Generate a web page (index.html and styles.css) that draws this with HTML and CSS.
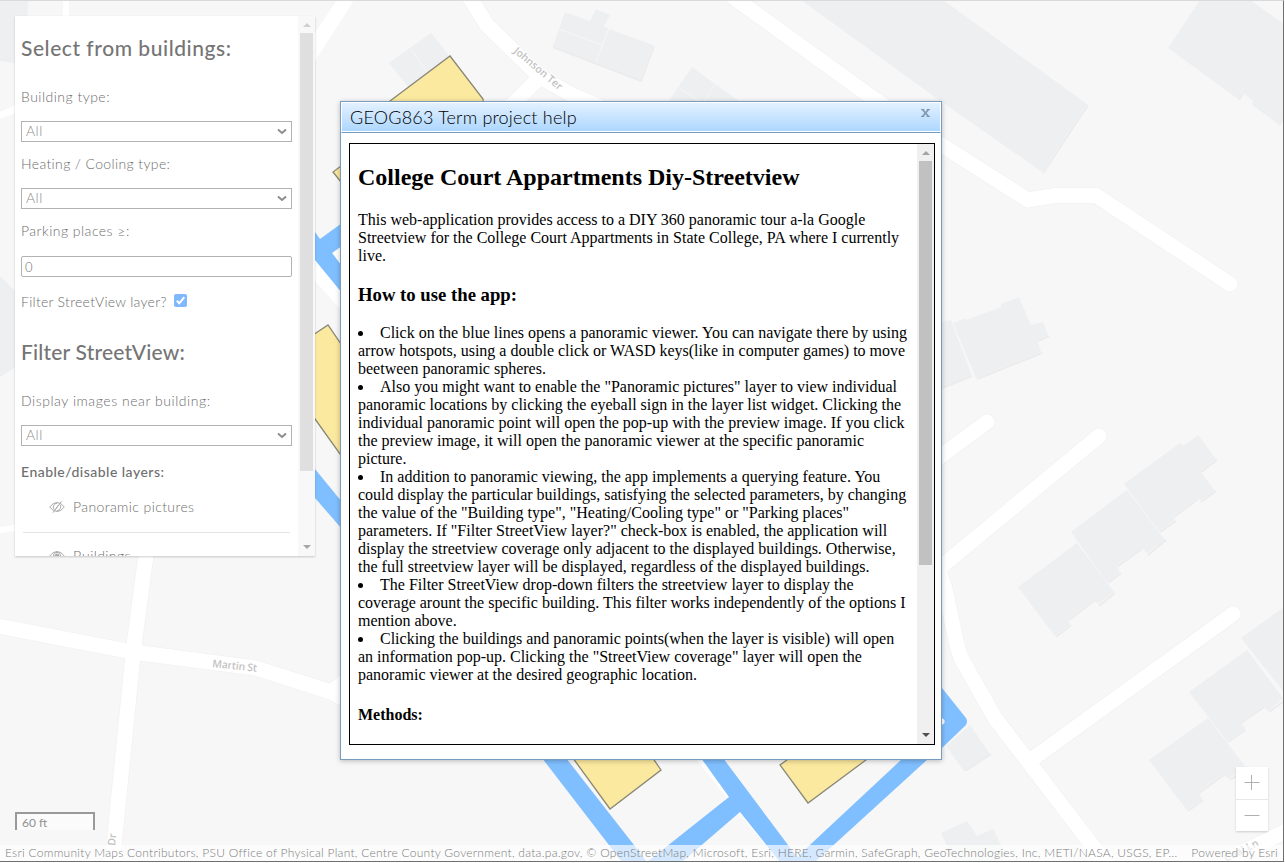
FILE: index.html
```html
<!DOCTYPE html>
<html lang="en">
<head>
<meta charset="utf-8">
<title>GEOG863 Term project</title>
<link rel="stylesheet" href="styles.css">
</head>
<body>
<div class="app">
  <svg class="map" viewBox="0 0 1285 863" width="1285" height="863">
    <rect class="ground" width="1285" height="863"/>
    <g class="buildings">
      <path d="M0 0H28L27 62L15 63L0 61Z"/>
      <path d="M0 276L16 292V367L0 377Z"/>
      <path d="M801 0H943L1087 104L1042 172L939 100Z"/>
      <path d="M565 12L590 21L596 9L610 15L604 26L609 29L653 45L640 80L553 46Z"/>
      <path d="M692 67L715 84L739 101H669Z"/>
      <path d="M431 33L450 57L409 88L389 63Z"/>
      <path d="M1200 0L1168 48L1238 99L1243 93L1253 101L1252 105L1278 124L1284 117V24L1250 0Z"/>
      <path d="M930 324L951 320L972 375L930 392Z"/>
      <path d="M953 323L966 318V320L1001 307V304L1019 297L1031 325L1043 322L1048 335L1037 340L1041 352L976 378Z"/>
      <path d="M1124 484L1180 443L1183 446L1198 435L1216 459L1200 471L1215 491L1201 500L1197 498L1173 516L1175 520L1159 531Z"/>
      <path d="M1071 532L1127 490L1165 540L1147 553L1142 548L1116 566L1120 572L1107 582Z"/>
      <path d="M1018 587L1077 543L1114 592L1098 604L1093 600L1068 619L1070 624L1055 636Z"/>
      <path d="M1241 638L1284 607V692Z"/>
      <path d="M1189 692L1247 650L1283 698L1268 711L1263 706L1241 722L1245 729L1227 741Z"/>
      <path d="M1149 760L1208 718L1245 766L1229 779L1223 774L1198 792L1202 799L1187 810Z"/>
      <path d="M946 746L970 725L990 754L964 771Z"/>
      <path d="M941 833L967 821L977 836L993 829L1001 845L1005 863H955Z"/>
    </g>
    <g class="shades">
      <path d="M1088 105L1043 173"/>
      <path d="M654 46L641 81L553 47"/>
      <path d="M1239 100L1243 94M1279 125L1284 118"/>
      <path d="M942 388L972 376M977 379L1042 353M1038 341L1049 336"/>
      <path d="M1160 532L1176 521M1174 517L1198 499M1201 502L1216 491M1201 472L1217 460"/>
      <path d="M1108 583L1121 573M1117 567L1142 549M1148 555L1166 540"/>
      <path d="M1056 637L1071 625M1069 620L1094 601M1099 606L1115 593"/>
      <path d="M1228 742L1245 730M1241 723L1264 707M1269 712L1284 701"/>
      <path d="M1188 811L1203 800M1199 793L1224 775M1230 780L1243 771"/>
      <path d="M965 771L991 754"/>
    </g>
    <path class="walls" d="M559 29L602 45M609 28L596 62M679 88L700 102M715 84L704 102M411 49L428 74M972 375L952 321"/>
    <g class="road-casing">
      <path d="M-5 625.5L133 652L256 668L331 692L352 703M331 692L352 676"/>
      <path d="M148 540L134 645L112 865"/>
      <path d="M468 -5L487 25L540 77L574 96L600 107M537 80L512 105"/>
      <path d="M730 -5L877 101L940 144L1028 200L1055 195.500H1096L1230 284"/>
      <path d="M930 464L987 422"/><path d="M930 576L1099 436"/>
      <path d="M935 560L945 589L957 645L961 658L995 718L1108 866M1035 757L1233 614"/>
      <path d="M1225 861L1290 829"/>
    </g>
    <g class="roads">
      <path d="M-5 625.5L133 652L256 668L331 692L352 703M331 692L352 676"/>
      <path d="M148 540L134 645L112 865"/>
      <path d="M468 -5L487 25L540 77L574 96L600 107M537 80L512 105"/>
      <path d="M730 -5L877 101L940 144L1028 200L1055 195.500H1096L1230 284"/>
      <path d="M930 464L987 422"/><path d="M930 576L1099 436"/>
      <path d="M935 560L945 589L957 645L961 658L995 718L1108 866M1035 757L1233 614"/>
      <path d="M1225 861L1290 829"/>
    </g>
    <path class="lane" d="M337 0H354L315 61V33Z M63 0H69V20H63Z M0 112L16 105V113L0 119Z M0 527L16 525V531L0 533Z M315 258L342 291V311L315 281Z M696 759H712L770 845H765Z"/>
    <g class="coverage">
      <path d="M315 232L320 239L342 223V246L332 253L342 266V293L315 260Z"/>
      <path d="M315 469L342 502V529L315 498Z"/>
      <path d="M542 758H566L634 845L647 862H622Z"/>
      <path d="M647 862L729 797L701 758H723L797 857L902 759L942 724V688L966 718Q968 721 966 725L942 748L928 759L815 862H780L740 812L682 862Z"/>
    </g>
    <path class="lane" d="M942 718L944.500 720V723L942 725Z M342 246L333 253L342 266Z"/>
    <g class="houses">
      <path d="M450 56L483 99L484 110H380L390 101Z"/>
      <path d="M345 163L333 172L345 187Z"/>
      <path d="M310 337L328 325L345 350V461L310 412Z"/>
      <path d="M570 754L610 809L661 770L650 754Z"/>
      <path d="M795 754L780 765L808 803L874 754Z"/>
    </g>
    <g class="street-names">
      <text transform="translate(513 52) rotate(40)" textLength="60">Johnson Ter</text>
      <text transform="translate(212 667) rotate(6)" textLength="45">Martin St</text>
      <text transform="translate(115 846) rotate(-84)">Dr</text>
      <text transform="translate(1226 862) rotate(-26)">Coal Ln</text>
    </g>
  </svg>

  <aside class="panel">
    <div class="form">
      <h2 class="heading">Select from buildings:</h2>
      <div class="label first">Building type:</div>
      <div class="select">All<svg class="caret" viewBox="0 0 10 7"><path d="M1 1.500L5 5L9 1.500"/></svg></div>
      <div class="label tight">Heating / Cooling type:</div>
      <div class="select">All<svg class="caret" viewBox="0 0 10 7"><path d="M1 1.500L5 5L9 1.500"/></svg></div>
      <div class="label">Parking places ≥:</div>
      <div class="select input">0</div>
      <div class="label check-row">Filter StreetView layer?<svg class="check" viewBox="0 0 13 13"><rect width="13" height="13" rx="2"/><path d="M2.800 6.800L5.300 9.300L10.300 3.200"/></svg></div>
      <h2 class="heading second">Filter StreetView:</h2>
      <div class="label first wide">Display images near building:</div>
      <div class="select">All<svg class="caret" viewBox="0 0 10 7"><path d="M1 1.500L5 5L9 1.500"/></svg></div>
      <div class="label strong">Enable/disable layers:</div>
      <div class="layer"><svg class="eye" viewBox="0 0 16 12"><path d="M.7 6Q4 1.500 8 1.500T15.300 6Q12 10.500 8 10.500T.7 6ZM10.500 3.200A3.700 3.700 0 0 1 8 9.700M8 2.300A3.700 3.700 0 0 0 5.400 8.700M12.500 .3L4 11.700M9.200 4.300L6.800 8"/></svg>Panoramic pictures</div>
      <div class="layer next"><svg class="eye" viewBox="0 0 16 12"><path d="M.7 6Q4 1.500 8 1.500T15.300 6Q12 10.500 8 10.500T.7 6Z"/><circle cx="8" cy="6" r="3.700"/><circle class="pupil" cx="8" cy="6" r="2"/></svg>Buildings</div>
    </div>
    <div class="scroll faded"><i class="up"></i><i class="thumb"></i><i class="down"></i></div>
  </aside>

  <div class="scalebar">60 ft</div>
  <div class="zoom"><div class="zoom-btn"><svg viewBox="0 0 16 16"><path d="M.5 7.500H15.500M7.500 0V15"/></svg></div><div class="zoom-btn"><svg viewBox="0 0 16 16"><path d="M.5 7.500H15.500"/></svg></div></div>
  <footer class="attribution"><span class="sources">Esri Community Maps Contributors, PSU Office of Physical Plant, Centre County Government, data.pa.gov, © OpenStreetMap, Microsoft, Esri, HERE, Garmin, SafeGraph, GeoTechnologies, Inc, METI/NASA, USGS, EP…</span><span class="powered">Powered by Esri</span></footer>

  <section class="dialog">
    <header class="titlebar"><span class="title">GEOG863 Term project help</span><svg class="close" viewBox="0 0 9 8"><path d="M0 .5H3.300M5.700 .5H9M0 7.500H3.300M5.700 7.500H9"/><path class="cross" d="M1.500 .5L7.500 7.500M7.500 .5L1.500 7.500"/></svg></header>
    <div class="frame">
      <article class="help">
        <h2>College Court Appartments Diy-Streetview</h2>
        <p>This web-application provides access to a DIY 360 panoramic tour a-la Google Streetview for the College Court Appartments in State College, PA where I currently live.</p>
        <h3>How to use the app:</h3>
        <ul class="steps">
          <li>Click on the blue lines opens a panoramic viewer. You can navigate there by using arrow hotspots, using a double click or WASD keys(like in computer games) to move beetween panoramic spheres.</li>
          <li>Also you might want to enable the "Panoramic pictures" layer to view individual panoramic locations by clicking the eyeball sign in the layer list widget. Clicking the individual panoramic point will open the pop-up with the preview image. If you click the preview image, it will open the panoramic viewer at the specific panoramic picture.</li>
          <li>In addition to panoramic viewing, the app implements a querying feature. You could display the particular buildings, satisfying the selected parameters, by changing the value of the "Building type", "Heating/Cooling type" or "Parking places" parameters. If "Filter StreetView layer?" check-box is enabled, the application will display the streetview coverage only adjacent to the displayed buildings. Otherwise, the full streetview layer will be displayed, regardless of the displayed buildings.</li>
          <li>The Filter StreetView drop-down filters the streetview layer to display the coverage arount the specific building. This filter works independently of the options I mention above.</li>
          <li>Clicking the buildings and panoramic points(when the layer is visible) will open an information pop-up. Clicking the "StreetView coverage" layer will open the panoramic viewer at the desired geographic location.</li>
        </ul>
        <h4>Methods:</h4>
      </article>
      <div class="scroll"><i class="up"></i><i class="thumb"></i><i class="down"></i></div>
    </div>
  </section>
</div>
</body>
</html>
```
FILE: styles.css
```css
* { box-sizing: border-box; }
body { margin: 0; overflow: hidden; background: #fff; font-family: Lato, "Open Sans", sans-serif; }
.app { position: relative; width: 1284px; height: 862px; overflow: hidden; border-top: 1px solid #dadada; border-right: 1px solid #707070; border-bottom: 1px solid #707070; }

/* map */
.map { position: absolute; left: 0; top: -1px; }
.ground { fill: #f7f7f7; }
.buildings path { fill: #eeeff1; }
.shades { fill: none; stroke: #ececed; stroke-width: 2; }
.walls { fill: none; stroke: #f7f7f7; stroke-width: 1; }
.roads, .road-casing { fill: none; stroke: #fff; stroke-width: 15; stroke-linecap: round; }
.road-casing { stroke: #f2f2f2; stroke-width: 16.5; }
.lane { fill: #fff; }
.coverage { fill: #80bfff; }
.houses { fill: #fbe99f; stroke: #8b8878; stroke-width: 1.3; }
.street-names { fill: #c2c2c2; font: 600 10.5px "Open Sans", sans-serif; stroke: #fff; stroke-width: 2; paint-order: stroke; }

/* side panel */
.panel { position: absolute; left: 15px; top: 15px; width: 300px; height: 540px; display: flex; background: #fff; overflow: hidden; box-shadow: 0 1px 2px rgba(0,0,0,.2); }
.form { flex: 1; padding-left: 6px; color: #6e6e6e; font-size: 14px; font-weight: 300; letter-spacing: .48px; white-space: nowrap; }
.heading { margin: 0; height: 64px; line-height: 63px; font-size: 21px; font-weight: 500; letter-spacing: .54px; color: #757575; }
.heading.second { margin-top: 1px; letter-spacing: .2px; }
.label { height: 34px; line-height: 34px; margin-top: 5px; }
.label.first { margin-top: 0; }
.label.tight { letter-spacing: .37px; }
.label.wide { letter-spacing: .55px; }
.label.strong { margin-top: 9px; font-weight: 500; letter-spacing: .48px; }
.select { width: 271px; height: 21px; margin-top: 7px; padding: 0 4px; border: 1px solid #b2b2b2; display: flex; align-items: center; justify-content: space-between; color: #8c8c8c; line-height: 18px; padding-bottom: 1px; }
.select.input { margin-top: 8px; border-radius: 2px; color: #707070; font-size: 13px; padding: 0 3px; }
.caret { width: 10px; height: 7px; fill: none; stroke: #8d8d8d; stroke-width: 2; }
.label.check-row { margin-top: 8px; display: flex; align-items: center; letter-spacing: .29px; }
.check { width: 13px; height: 13px; margin: -3px 0 0 7px; fill: #80b9fb; }
.check path { fill: none; stroke: #fff; stroke-width: 2; }
.layer { height: 43px; line-height: 34px; margin: 1px 8px 0 2px; padding-left: 26px; display: flex; border-bottom: 1px solid #e4e4e4; width: 267px; letter-spacing: .4px; }
.layer.next { margin-top: 6px; border: 0; }
.eye { width: 16px; height: 12px; margin: 11px 8px 0 0; fill: none; stroke: #aaa; stroke-width: 1; }
.eye .pupil { fill: #aaa; }

/* scrollbars */
.scroll { width: 17px; background: #f0f0f0; display: flex; flex-direction: column; align-items: center; }
.scroll.faded { background: #f8f8f8; }
.scroll i { display: block; }
.up { border: 4px solid transparent; border-top: 0; border-bottom: 4px solid #a3a3a3; margin: 7px 0 6px; }
.thumb { width: 13px; height: 404px; background: #c1c1c1; }
.down { border: 4px solid transparent; border-bottom: 0; border-top: 4px solid #505050; margin-top: auto; margin-bottom: 7px; }
.faded .thumb { height: 438px; background: #dfdfdf; }
.faded .up { border-bottom-color: #d0d0d0; }
.faded .down { border-top-color: #a7a7a7; }

/* map widgets */
.scalebar { position: absolute; left: 15px; top: 811px; width: 80px; height: 18px; border: 2px solid #999; border-bottom: 0; background: rgba(255,255,255,.5); padding-left: 5px; font-size: 12px; line-height: 17px; color: #909090; }
.zoom { position: absolute; left: 1236px; top: 766px; width: 32px; box-shadow: 0 1px 2px rgba(0,0,0,.18); }
.zoom-btn { height: 32px; background: #fff; display: flex; align-items: center; justify-content: center; }
.zoom-btn + .zoom-btn { border-top: 1px solid #e8e8e8; }
.zoom-btn svg { width: 16px; height: 16px; fill: none; stroke: #b0b0b0; }
.attribution { position: absolute; left: 0; top: 844px; width: 1283px; height: 16px; padding: 0 5px; display: flex; justify-content: space-between; background: rgba(255,255,255,.66); font-size: 12px; font-weight: 300; line-height: 16px; color: #7c7c7c; white-space: nowrap; }
.sources { letter-spacing: .275px; }
.powered { letter-spacing: .25px; }

/* help dialog */
.dialog { position: absolute; left: 340px; top: 100px; width: 602px; height: 659px; border: 1px solid #769dc0; background: #fff; box-shadow: 0 1px 5px rgba(0,0,0,.25); }
.titlebar { height: 31px; border: 1px solid #fff; border-bottom: 1px solid #769dc0; background: linear-gradient(#e3f1ff, #abd6ff); display: flex; justify-content: space-between; box-shadow: inset 0 -1px #fff; }
.title { padding-left: 8px; font-size: 18px; font-weight: 300; line-height: 28px; letter-spacing: .2px; color: #000; }
.close { width: 9px; height: 8px; margin: 6px 10px 0 0; fill: none; stroke: #8199b3; }
.close .cross { stroke-width: 1.800; }
.frame { height: 602px; width: 586px; margin: 10px 0 0 8px; border: 1px solid #000; display: flex; overflow: hidden; }
.help { width: 567px; padding: 0 8px; font: 16px "Liberation Serif", "Times New Roman", serif; color: #000; }
.help h2 { margin: 20px 0; font-size: 24px; line-height: 27px; }
.help p { margin: 0; }
.help h3 { margin: 19px 0 18px; font-size: 18.720px; line-height: 22px; }
.help h4 { margin: 22px 0; }
.steps { margin: 0; padding: 0; list-style-position: inside; }
.frame .scroll { height: 600px; }
```
